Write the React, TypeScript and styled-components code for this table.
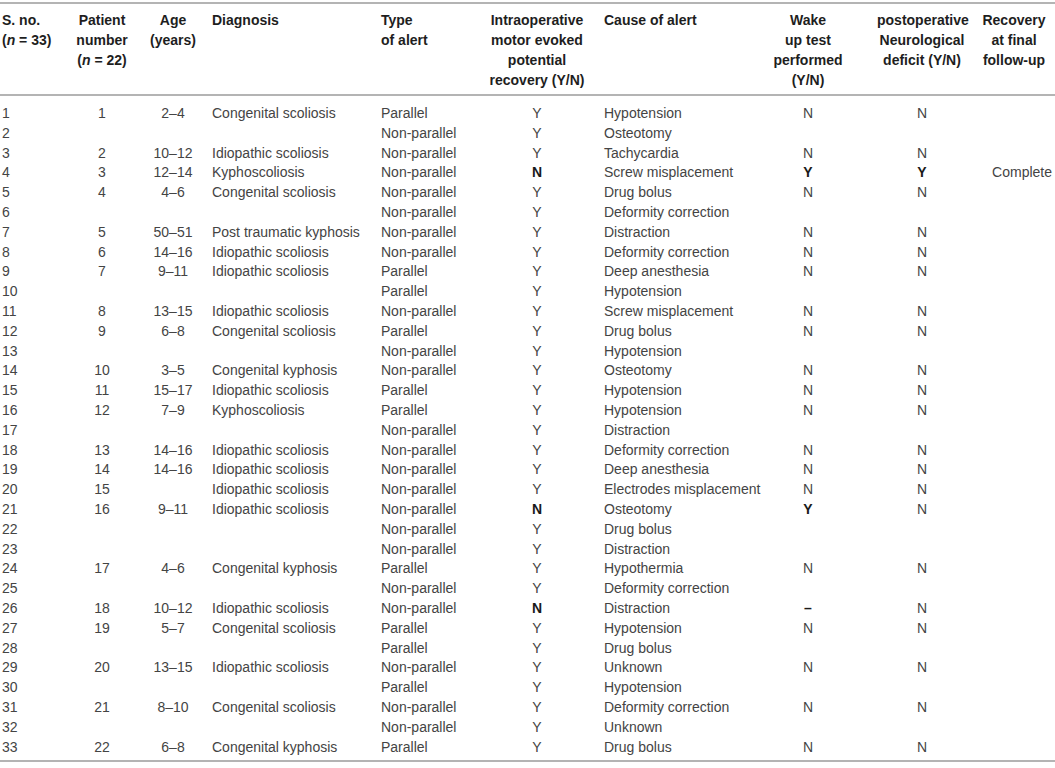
import React from "react"
import styled, { createGlobalStyle } from "styled-components"

const GlobalStyle = createGlobalStyle`
    html, body {
        margin: 0;
        padding: 0;
        background: #fff;
    }
    body {
        font-family: "Liberation Sans", Arial, Helvetica, sans-serif;
    }
`

type Align = "left" | "center" | "right"

interface IColumn {
    width: number
    head: React.ReactNode
    headAlign: Align
    align: Align
}

const N = () => <i>n</i>

const columns: IColumn[] = [
    { width: 64, head: <>S. no.<br />(<N /> = 33)</>, headAlign: "left", align: "left" },
    { width: 76, head: <>Patient<br />number<br />(<N /> = 22)</>, headAlign: "center", align: "center" },
    { width: 66, head: <>Age<br />(years)</>, headAlign: "center", align: "center" },
    { width: 169, head: "Diagnosis", headAlign: "left", align: "left" },
    { width: 101, head: <>Type<br />of alert</>, headAlign: "left", align: "left" },
    { width: 122, head: <>Intraoperative<br />motor evoked<br />potential<br />recovery (Y/N)</>, headAlign: "center", align: "center" },
    { width: 147, head: "Cause of alert", headAlign: "left", align: "left" },
    { width: 126, head: <>Wake<br />up test<br />performed<br />(Y/N)</>, headAlign: "center", align: "center" },
    { width: 102, head: <>postoperative<br />Neurological<br />deficit (Y/N)</>, headAlign: "center", align: "center" },
    { width: 82, head: <>Recovery<br />at final<br />follow-up</>, headAlign: "center", align: "right" },
]

// "*" marks a bold value
const rows: string[][] = [
    ["1", "1", "2–4", "Congenital scoliosis", "Parallel", "Y", "Hypotension", "N", "N", ""],
    ["2", "", "", "", "Non-parallel", "Y", "Osteotomy", "", "", ""],
    ["3", "2", "10–12", "Idiopathic scoliosis", "Non-parallel", "Y", "Tachycardia", "N", "N", ""],
    ["4", "3", "12–14", "Kyphoscoliosis", "Non-parallel", "*N", "Screw misplacement", "*Y", "*Y", "Complete"],
    ["5", "4", "4–6", "Congenital scoliosis", "Non-parallel", "Y", "Drug bolus", "N", "N", ""],
    ["6", "", "", "", "Non-parallel", "Y", "Deformity correction", "", "", ""],
    ["7", "5", "50–51", "Post traumatic kyphosis", "Non-parallel", "Y", "Distraction", "N", "N", ""],
    ["8", "6", "14–16", "Idiopathic scoliosis", "Non-parallel", "Y", "Deformity correction", "N", "N", ""],
    ["9", "7", "9–11", "Idiopathic scoliosis", "Parallel", "Y", "Deep anesthesia", "N", "N", ""],
    ["10", "", "", "", "Parallel", "Y", "Hypotension", "", "", ""],
    ["11", "8", "13–15", "Idiopathic scoliosis", "Non-parallel", "Y", "Screw misplacement", "N", "N", ""],
    ["12", "9", "6–8", "Congenital scoliosis", "Parallel", "Y", "Drug bolus", "N", "N", ""],
    ["13", "", "", "", "Non-parallel", "Y", "Hypotension", "", "", ""],
    ["14", "10", "3–5", "Congenital kyphosis", "Non-parallel", "Y", "Osteotomy", "N", "N", ""],
    ["15", "11", "15–17", "Idiopathic scoliosis", "Parallel", "Y", "Hypotension", "N", "N", ""],
    ["16", "12", "7–9", "Kyphoscoliosis", "Parallel", "Y", "Hypotension", "N", "N", ""],
    ["17", "", "", "", "Non-parallel", "Y", "Distraction", "", "", ""],
    ["18", "13", "14–16", "Idiopathic scoliosis", "Non-parallel", "Y", "Deformity correction", "N", "N", ""],
    ["19", "14", "14–16", "Idiopathic scoliosis", "Non-parallel", "Y", "Deep anesthesia", "N", "N", ""],
    ["20", "15", "", "Idiopathic scoliosis", "Non-parallel", "Y", "Electrodes misplacement", "N", "N", ""],
    ["21", "16", "9–11", "Idiopathic scoliosis", "Non-parallel", "*N", "Osteotomy", "*Y", "N", ""],
    ["22", "", "", "", "Non-parallel", "Y", "Drug bolus", "", "", ""],
    ["23", "", "", "", "Non-parallel", "Y", "Distraction", "", "", ""],
    ["24", "17", "4–6", "Congenital kyphosis", "Parallel", "Y", "Hypothermia", "N", "N", ""],
    ["25", "", "", "", "Non-parallel", "Y", "Deformity correction", "", "", ""],
    ["26", "18", "10–12", "Idiopathic scoliosis", "Non-parallel", "*N", "Distraction", "*–", "N", ""],
    ["27", "19", "5–7", "Congenital scoliosis", "Parallel", "Y", "Hypotension", "N", "N", ""],
    ["28", "", "", "", "Parallel", "Y", "Drug bolus", "", "", ""],
    ["29", "20", "13–15", "Idiopathic scoliosis", "Non-parallel", "Y", "Unknown", "N", "N", ""],
    ["30", "", "", "", "Parallel", "Y", "Hypotension", "", "", ""],
    ["31", "21", "8–10", "Congenital scoliosis", "Non-parallel", "Y", "Deformity correction", "N", "N", ""],
    ["32", "", "", "", "Non-parallel", "Y", "Unknown", "", "", ""],
    ["33", "22", "6–8", "Congenital kyphosis", "Parallel", "Y", "Drug bolus", "N", "N", ""],
]

const Table = styled.table`
    width: 1055px;
    margin-top: 2px;
    border-collapse: collapse;
    table-layout: fixed;
    font-size: 14px;
    border-top: 2px solid #b4b4b4;
    border-bottom: 2px solid #b4b4b4;
`

const HeadRow = styled.tr`
    border-bottom: 2px solid #b4b4b4;
`

const HeadCell = styled.th<{ $align: Align }>`
    text-align: ${props => props.$align};
    vertical-align: top;
    font-weight: bold;
    color: #1e1e1e;
    line-height: 20px;
    padding: 6px 6px 4px;
    white-space: nowrap;

    &:first-child {
        padding-left: 2px;
    }

    i {
        font-style: italic;
    }
`

const BodyRow = styled.tr`
    &:first-child td {
        padding-top: 8px;
    }

    &:last-child td {
        padding-bottom: 3px;
    }
`

const Cell = styled.td<{ $align: Align; $bold?: boolean }>`
    text-align: ${props => props.$align};
    font-weight: ${props => (props.$bold ? "bold" : "normal")};
    color: ${props => (props.$bold ? "#1a1a1a" : "#444")};
    line-height: 19.8px;
    height: 19.8px;
    padding: 0 6px;
    white-space: nowrap;
    overflow: visible;

    &:first-child {
        padding-left: 2px;
    }

    &:last-child {
        padding-right: 3px;
    }
`

export default function App() {
    return (
        <>
            <GlobalStyle />
            <Table>
                <colgroup>
                    {columns.map((c, i) => (
                        <col key={i} style={{ width: c.width }} />
                    ))}
                </colgroup>
                <thead>
                    <HeadRow>
                        {columns.map((c, i) => (
                            <HeadCell key={i} $align={c.headAlign}>
                                {c.head}
                            </HeadCell>
                        ))}
                    </HeadRow>
                </thead>
                <tbody>
                    {rows.map((row, r) => (
                        <BodyRow key={r}>
                            {row.map((value, i) => {
                                const bold = value.startsWith("*")
                                return (
                                    <Cell key={i} $align={columns[i].align} $bold={bold}>
                                        {bold ? value.slice(1) : value}
                                    </Cell>
                                )
                            })}
                        </BodyRow>
                    ))}
                </tbody>
            </Table>
        </>
    )
}
